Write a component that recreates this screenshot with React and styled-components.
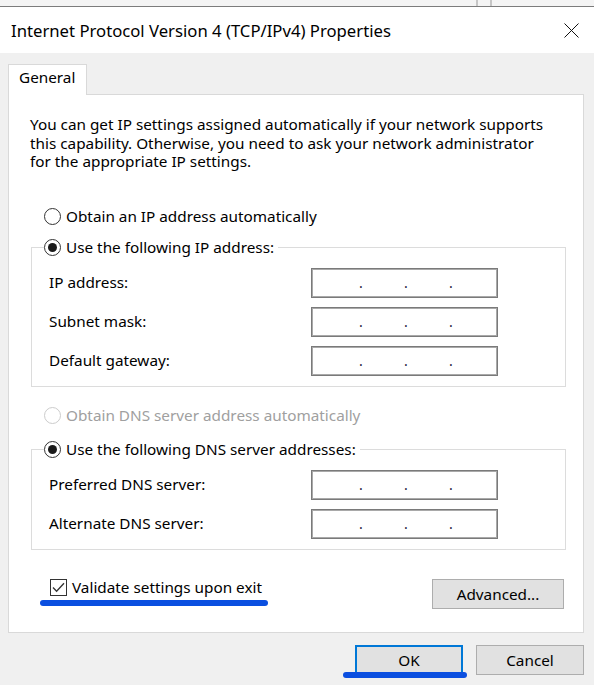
import React from "react";
import styled, { createGlobalStyle, css } from "styled-components";

const GlobalStyle = createGlobalStyle`
  html, body { margin: 0; padding: 0; background: #f0f0f0; }
  body { font-family: "Noto Sans", "Segoe UI", sans-serif; color: #000; }
  * { box-sizing: border-box; }
`;

const FONT = "15.3px";

const Window = styled.div`
  width: 594px;
  height: 685px;
  display: flex;
  flex-direction: column;
  overflow: hidden;
  background: #f0f0f0;
`;

const BackStrip = styled.div`
  height: 7px;
  flex: none;
  display: flex;
  overflow: hidden;
  background: #f4f4f4;
  border-bottom: 1px solid #7c7c7c;
`;

const BackText = styled.span`
  margin: -16px 0 0 6px;
  font-size: 15px;
  line-height: 18px;
  color: #444;
  white-space: nowrap;
`;

const BackDividers = styled.div`
  margin-left: auto;
  margin-right: 102px;
  display: flex;
  gap: 12px;
`;

const BackDivider = styled.span`
  width: 2px;
  background: #c6c6c6;
`;

const TitleBar = styled.div`
  height: 46px;
  flex: none;
  display: flex;
  align-items: center;
  justify-content: space-between;
  padding: 0 15px 0 11px;
  background: #fff;
`;

const Title = styled.span`
  font-size: 16.7px;
  white-space: nowrap;
`;

const CloseIcon = styled.svg`
  width: 15px;
  height: 15px;
  display: block;
`;

const Body = styled.div`
  flex: 1;
  display: flex;
  flex-direction: column;
  padding: 11px 10px 0 8px;
`;

const Tab = styled.div`
  align-self: flex-start;
  width: 79px;
  height: 31px;
  padding: 3px 0 0 10px;
  background: #fff;
  border: 1px solid #d9d9d9;
  border-bottom: none;
  margin-bottom: -1px;
  position: relative;
  z-index: 1;
  font-size: ${FONT};
  line-height: 19px;
`;

const Panel = styled.div`
  display: flex;
  flex-direction: column;
  background: #fff;
  border: 1px solid #d9d9d9;
  padding: 20px 17px 23px 21px;
`;

const Description = styled.p`
  margin: 0;
  font-size: ${FONT};
  line-height: 18.5px;
  white-space: nowrap;
`;

const RadioRow = styled.label`
  display: flex;
  align-items: center;
  gap: 5px;
  height: 20px;
  font-size: ${FONT};
  line-height: 19px;
  white-space: nowrap;
  color: ${(p) => (p.$disabled ? "#a0a0a0" : "#000")};
  margin: ${(p) => p.$margin || "0"};
`;

const RadioCircle = styled.span`
  width: 17px;
  height: 17px;
  flex: none;
  border-radius: 50%;
  border: 1px solid ${(p) => (p.$disabled ? "#cccccc" : "#333")};
  background: #fff;
  display: flex;
  align-items: center;
  justify-content: center;
  ${(p) =>
    p.$checked &&
    css`
      &::before {
        content: "";
        width: 9px;
        height: 9px;
        border-radius: 50%;
        background: #1a1a1a;
      }
    `}
`;

const Group = styled.fieldset`
  margin: ${(p) => p.$margin};
  padding: 10px 67px 10px 17px;
  border: 1px solid #dcdcdc;
  min-width: 0;
`;

const GroupLegend = styled.legend`
  padding: 0 4px 0 0;
  margin-left: -5px;
`;

const Rows = styled.div`
  display: flex;
  flex-direction: column;
  gap: 9px;
`;

const FieldRow = styled.div`
  display: grid;
  grid-template-columns: 1fr 187px;
  align-items: center;
`;

const FieldLabel = styled.span`
  font-size: ${FONT};
  line-height: 19px;
  white-space: nowrap;
`;

const IpInput = styled.div`
  width: 187px;
  height: 30px;
  display: flex;
  align-items: flex-start;
  padding: 4px 0 0 47px;
  border: 1px solid #7a7a7a;
  box-shadow: inset 0 0 0 1px #a9a9a9;
  background: #fff;
`;

const Dot = styled.span`
  width: 45px;
  flex: none;
  font-size: 14px;
  line-height: 19px;
  color: #1a1a3a;
`;

const FooterRow = styled.div`
  margin-top: 28px;
  display: flex;
  justify-content: space-between;
  align-items: flex-start;
`;

const CheckLabel = styled.label`
  position: relative;
  display: flex;
  align-items: center;
  gap: 5px;
  height: 18px;
  margin: 1px 0 0 20px;
  font-size: ${FONT};
  line-height: 19px;
  white-space: nowrap;
  &::after {
    content: "";
    position: absolute;
    left: -10px;
    top: 21px;
    width: 228px;
    height: 6px;
    border-radius: 3px;
    background: #0b4fe0;
  }
`;

const CheckBox = styled.span`
  width: 17px;
  height: 17px;
  flex: none;
  border: 1px solid #333;
  background: #fff;
  display: flex;
  align-items: center;
  justify-content: center;
`;

const Button = styled.button`
  font-family: inherit;
  font-size: ${FONT};
  color: #000;
  height: 30px;
  width: ${(p) => p.$width}px;
  background: #e1e1e1;
  border: ${(p) => (p.$primary ? "2px solid #0078d7" : "1px solid #adadad")};
  padding: 0;
  position: relative;
  ${(p) =>
    p.$marked &&
    css`
      &::after {
        content: "";
        position: absolute;
        left: -14px;
        bottom: -5px;
        width: 124px;
        height: 6px;
        border-radius: 3px;
        background: #0b4fe0;
      }
    `}
`;

const AdvancedButton = styled(Button)`
  margin: 1px 2px 0 0;
`;

const ButtonRow = styled.div`
  display: flex;
  justify-content: flex-end;
  gap: 13px;
  margin-top: 12px;
`;

function Radio({ checked, disabled, children, margin }) {
  return (
    <RadioRow $disabled={disabled} $margin={margin}>
      <RadioCircle $checked={checked} $disabled={disabled} />
      {children}
    </RadioRow>
  );
}

function IpField() {
  return (
    <IpInput>
      <Dot>.</Dot>
      <Dot>.</Dot>
      <Dot>.</Dot>
    </IpInput>
  );
}

function Field({ label }) {
  return (
    <FieldRow>
      <FieldLabel>{label}</FieldLabel>
      <IpField />
    </FieldRow>
  );
}

export default function App() {
  return (
    <Window>
      <GlobalStyle />
      <BackStrip>
        <BackText>connection:</BackText>
        <BackDividers>
          <BackDivider />
          <BackDivider />
        </BackDividers>
      </BackStrip>
      <TitleBar>
        <Title>Internet Protocol Version 4 (TCP/IPv4) Properties</Title>
        <CloseIcon viewBox="0 0 15 15">
          <path d="M0.5 0.5 L14.5 14.5 M14.5 0.5 L0.5 14.5" stroke="#111" strokeWidth="1" fill="none" />
        </CloseIcon>
      </TitleBar>
      <Body>
        <Tab>General</Tab>
        <Panel>
          <Description>
            You can get IP settings assigned automatically if your network supports
            <br />
            this capability. Otherwise, you need to ask your network administrator
            <br />
            for the appropriate IP settings.
          </Description>
          <Radio margin="36px 0 0 14px">Obtain an IP address automatically</Radio>
          <Group $margin="11px 0 0 1px">
            <GroupLegend>
              <Radio checked>Use the following IP address:</Radio>
            </GroupLegend>
            <Rows>
              <Field label="IP address:" />
              <Field label="Subnet mask:" />
              <Field label="Default gateway:" />
            </Rows>
          </Group>
          <Radio disabled margin="19px 0 0 14px">
            Obtain DNS server address automatically
          </Radio>
          <Group $margin="14px 0 0 1px">
            <GroupLegend>
              <Radio checked>Use the following DNS server addresses:</Radio>
            </GroupLegend>
            <Rows>
              <Field label="Preferred DNS server:" />
              <Field label="Alternate DNS server:" />
            </Rows>
          </Group>
          <FooterRow>
            <CheckLabel>
              <CheckBox>
                <svg width="13" height="11" viewBox="0 0 13 11">
                  <path d="M1 5.5 L4.6 9.2 L12 1.2" stroke="#333" strokeWidth="1.3" fill="none" />
                </svg>
              </CheckBox>
              Validate settings upon exit
            </CheckLabel>
            <AdvancedButton $width={132}>Advanced...</AdvancedButton>
          </FooterRow>
        </Panel>
        <ButtonRow>
          <Button $width={108} $primary $marked>OK</Button>
          <Button $width={108}>Cancel</Button>
        </ButtonRow>
      </Body>
    </Window>
  );
}
